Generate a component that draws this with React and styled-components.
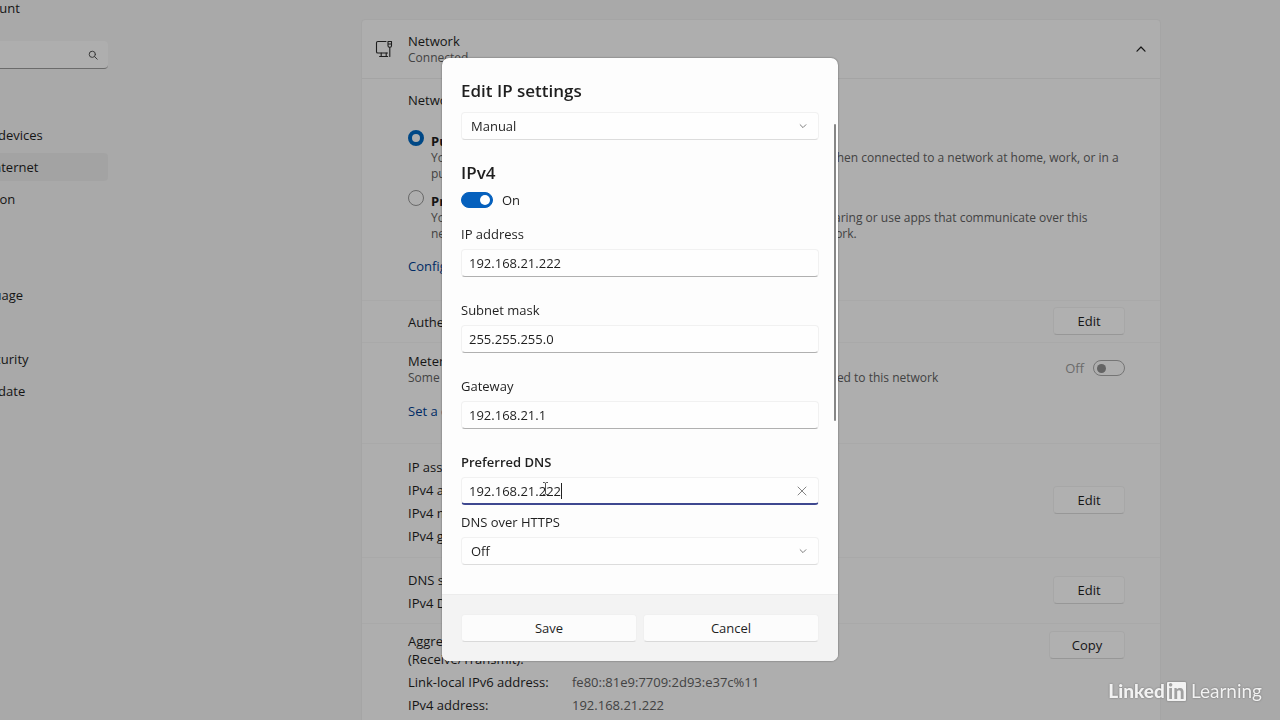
import React, { useState } from "react";
import styled, { createGlobalStyle } from "styled-components";

const sidebarItems = [
  { label: "Bluetooth & devices", top: 0 },
  { label: "Network & internet", top: 4, active: true },
  { label: "Personalization", top: 4 },
  { label: "Time & language", top: 68 },
  { label: "Privacy & security", top: 36 },
  { label: "Windows Update", top: 4 },
];

const ChevronIcon = ({ up, size = 8 }) => (
  <svg width={size} height={size} viewBox="0 0 10 10" fill="none" stroke="currentColor" strokeWidth="1.2" strokeLinecap="round" strokeLinejoin="round">
    <path d={up ? "M1 7.2 5 3l4 4.200" : "M1.400 3.400 5 7 8.600 3.400"} />
  </svg>
);

const SearchIcon = () => (
  <svg width="10" height="10" viewBox="0 0 10 10" fill="none" stroke="#555" strokeWidth="1" strokeLinecap="round">
    <circle cx="4.300" cy="4.300" r="3.100" />
    <path d="M6.600 6.600 9.200 9.200" />
  </svg>
);

const EthernetIcon = () => (
  <svg width="18" height="18" viewBox="0 0 18 18" fill="none" stroke="#2a2a2a" strokeWidth="1.1" strokeLinecap="round" strokeLinejoin="round">
    <path d="M11 1.500H2.800a1.300 1.300 0 0 0-1.300 1.300v8.900A1.300 1.300 0 0 0 2.800 13h9.700" />
    <path d="M6.200 13v3.500M11.200 13v3.500M4.600 16.500h8" />
    <path d="M13 1.500h3.500v4.300a1.500 1.500 0 0 1-1.500 1.500h-.5a1.500 1.500 0 0 1-1.500-1.500zM13 4h3.500M14.800 7.300v9.200" />
  </svg>
);

const CloseIcon = () => (
  <svg width="10" height="10" viewBox="0 0 10 10" fill="none" stroke="#777" strokeWidth="0.9" strokeLinecap="round">
    <path d="M1 1 9 9M9 1 1 9" />
  </svg>
);

const TextPointer = () => (
  <Pointer width="7" height="13" viewBox="0 0 7 13" fill="none" stroke="#555" strokeWidth="1">
    <path d="M1 .5h1.800l.7.700.7-.700H6M3.500 1v11M1 12.500h1.800l.7-.700.7.700H6" />
  </Pointer>
);

const TextField = ({ id, label, value, onChange }) => (
  <FieldGroup>
    <FieldLabel htmlFor={id}>{label}</FieldLabel>
    <FieldInput id={id} value={value} onChange={(e) => onChange(e.target.value)} />
  </FieldGroup>
);

const EditIpModal = () => {
  const [mode, setMode] = useState("Manual");
  const [enabled, setEnabled] = useState(true);
  const [ip, setIp] = useState("192.168.21.222");
  const [mask, setMask] = useState("255.255.255.0");
  const [gateway, setGateway] = useState("192.168.21.1");
  const [dns, setDns] = useState("192.168.21.222");
  const [doh, setDoh] = useState("Off");

  return (
    <Overlay>
      <Modal role="dialog" aria-labelledby="modal-title">
        <ModalBody>
          <ModalTitle id="modal-title">Edit IP settings</ModalTitle>
          <SelectBox>
            <select aria-labelledby="modal-title" value={mode} onChange={(e) => setMode(e.target.value)}>
              <option>Manual</option>
            </select>
            <ChevronIcon />
          </SelectBox>
          <SectionTitle>IPv4</SectionTitle>
          <SwitchLabel>
            <Switch type="checkbox" checked={enabled} onChange={() => setEnabled(!enabled)} />
            {enabled ? "On" : "Off"}
          </SwitchLabel>
          <TextField id="ip" label="IP address" value={ip} onChange={setIp} />
          <TextField id="mask" label="Subnet mask" value={mask} onChange={setMask} />
          <TextField id="gateway" label="Gateway" value={gateway} onChange={setGateway} />
          <FieldLabel htmlFor="dns" $bold>Preferred DNS</FieldLabel>
          <ActiveField>
            <FieldInput id="dns" $active value={dns} onChange={(e) => setDns(e.target.value)} />
            <Caret />
            <TextPointer />
            <ClearBtn aria-label="Clear" onClick={() => setDns("")}>
              <CloseIcon />
            </ClearBtn>
          </ActiveField>
          <FieldLabel htmlFor="doh">DNS over HTTPS</FieldLabel>
          <SelectBox>
            <select id="doh" value={doh} onChange={(e) => setDoh(e.target.value)}>
              <option>Off</option>
            </select>
            <ChevronIcon />
          </SelectBox>
          <ScrollThumb />
        </ModalBody>
        <ModalFooter>
          <Button>Save</Button>
          <Button>Cancel</Button>
        </ModalFooter>
      </Modal>
    </Overlay>
  );
};

export default function App() {
  const [profile, setProfile] = useState("public");

  return (
    <>
      <GlobalStyle />
      <Page>
        <Sidebar>
          <Account>Local Account</Account>
          <SearchBox>
            <input aria-label="Search" />
            <SearchIcon />
          </SearchBox>
          <nav>
            {sidebarItems.map((item) => (
              <NavItem key={item.label} href="#" $top={item.top} $active={item.active}>
                {item.label}
              </NavItem>
            ))}
          </nav>
        </Sidebar>
        <Main>
          <Card>
            <CardHeader>
              <EthernetIcon />
              <div>
                <Text>Network</Text>
                <Hint>Connected</Hint>
              </div>
              <ChevronIcon up size={10} />
            </CardHeader>

            <ProfileSection>
              <Text>Network profile type</Text>
              <RadioList>
                <RadioRow>
                  <input
                    type="radio"
                    name="profile"
                    id="public"
                    checked={profile === "public"}
                    onChange={() => setProfile("public")}
                  />
                  <div>
                    <label htmlFor="public">Public network (Recommended)</label>
                    <Hint>
                      Your device is not discoverable on the network. Use this in most cases–when connected to a network at home, work, or in a
                      <br />
                      public place.
                    </Hint>
                  </div>
                </RadioRow>
                <RadioRow>
                  <input
                    type="radio"
                    name="profile"
                    id="private"
                    checked={profile === "private"}
                    onChange={() => setProfile("private")}
                  />
                  <div>
                    <label htmlFor="private">Private network</label>
                    <Hint>
                      Your device is discoverable on the network. Select this if you need file sharing or use apps that communicate over this
                      <br />
                      network. You should know and trust the people and devices on the network.
                    </Hint>
                  </div>
                </RadioRow>
              </RadioList>
              <Link href="#">Configure firewall and security settings</Link>
            </ProfileSection>

            <Section $height={42}>
              <Text>Authentication settings</Text>
              <Button>Edit</Button>
            </Section>

            <MeteredSection>
              <div>
                <Text>Metered connection</Text>
                <Hint>Some apps might work differently to reduce data usage when you're connected to this network</Hint>
                <Link href="#">Set a data limit to help control data usage on this network</Link>
              </div>
              <SwitchLabel $muted>
                Off
                <Switch type="checkbox" disabled />
              </SwitchLabel>
            </MeteredSection>

            <Section $height={114}>
              <Details>
                <dt>IP assignment:</dt>
                <dt>IPv4 address:</dt>
                <dt>IPv4 mask:</dt>
                <dt>IPv4 gateway:</dt>
              </Details>
              <Button>Edit</Button>
            </Section>

            <Section $height={66}>
              <Details>
                <dt>DNS server assignment:</dt>
                <dt>IPv4 DNS servers:</dt>
              </Details>
              <Button>Edit</Button>
            </Section>

            <Section $height={110} $alignTop>
              <Details>
                <dt>
                  Aggregated link speed
                  <br />
                  (Receive/Transmit):
                </dt>
                <dt>Link-local IPv6 address:</dt>
                <dd>fe80::81e9:7709:2d93:e37c%11</dd>
                <dt>IPv4 address:</dt>
                <dd>192.168.21.222</dd>
              </Details>
              <Button $wide>Copy</Button>
            </Section>
          </Card>
        </Main>
      </Page>
      <EditIpModal />
      <Watermark>
        <b>Linked</b>
        <i>in</i>
        <span>Learning</span>
      </Watermark>
    </>
  );
}

const GlobalStyle = createGlobalStyle`
  * {
    box-sizing: border-box;
  }
  body {
    margin: 0;
    height: 100vh;
    overflow: hidden;
    background-color: #f2f2f2;
    color: #1f1f1f;
    font: 13px/18px "Open Sans", "Noto Sans", sans-serif;
  }
  input, select, button {
    font: inherit;
    color: inherit;
  }
`;
const Page = styled.div`
  display: flex;
  align-items: flex-start;
`;
const Sidebar = styled.aside`
  flex: none;
  width: 228px;
  margin-left: -120px;
`;
const Account = styled.div`
  height: 41px;
  padding-left: 56px;
  line-height: 16px;
`;
const SearchBox = styled.div`
  display: flex;
  align-items: center;
  height: 28px;
  margin-bottom: 52px;
  padding-right: 10px;
  background-color: #f9f9f9;
  border-bottom: 1px solid #9a9a9a;
  border-radius: 4px;
  input {
    flex: 1;
    min-width: 0;
    border: none;
    outline: none;
    background: none;
  }
`;
const NavItem = styled.a`
  display: flex;
  align-items: center;
  height: 28px;
  margin-top: ${(props) => props.$top}px;
  padding-left: 42px;
  border-radius: 4px;
  color: inherit;
  text-decoration: none;
  background-color: ${(props) => (props.$active ? "#eaeaea" : "transparent")};
`;
const Main = styled.main`
  flex: 1;
  min-width: 0;
  padding: 19px 119px 0 253px;
`;
const Card = styled.section`
  background-color: #f9f9f9;
  border: 1px solid #ececec;
  border-radius: 4px;
`;
const CardHeader = styled.header`
  display: flex;
  align-items: center;
  height: 59px;
  padding: 0 14px 0 13px;
  border-bottom: 1px solid #ebebeb;
  &>div {
    flex: 1;
    padding-left: 15px;
  }
`;
const Text = styled.div`
  white-space: nowrap;
`;
const Hint = styled.div`
  font-size: 12px;
  line-height: 16px;
  white-space: nowrap;
  color: #606060;
`;
const Link = styled.a`
  color: #003e92;
  text-decoration: none;
  white-space: nowrap;
`;
const ProfileSection = styled.div`
  height: 221px;
  padding: 12px 35px 0 46px;
  &>a {
    display: block;
    margin-top: 15px;
  }
`;
const RadioList = styled.div`
  display: grid;
  gap: 8px;
  margin-top: 21px;
`;
const RadioRow = styled.div`
  display: flex;
  gap: 7px;
  input {
    appearance: none;
    flex: none;
    width: 16px;
    height: 16px;
    margin: 0;
    border: 1px solid #969696;
    border-radius: 50%;
    &:checked {
      border: 4px solid #0067c0;
    }
  }
  label {
    display: block;
    padding-top: 2px;
    font-weight: 700;
  }
`;
const Button = styled.button`
  flex: none;
  width: ${(props) => (props.$wide ? 76 : 72)}px;
  height: 28px;
  padding: 0;
  background-color: #fcfcfc;
  border: 1px solid #f0f0f0;
  border-bottom-color: #d9d9d9;
  border-radius: 4px;
`;
const Section = styled.div`
  display: flex;
  justify-content: space-between;
  align-items: ${(props) => (props.$alignTop ? "flex-start" : "center")};
  min-height: ${(props) => props.$height}px;
  padding: ${(props) => (props.$alignTop ? "7px" : "0")} 35px 0 46px;
  border-top: 1px solid #f3f3f3;
  ${Button} {
    margin-bottom: 2px;
  }
`;
const MeteredSection = styled.div`
  display: flex;
  justify-content: space-between;
  align-items: flex-start;
  height: 101px;
  padding: 9px 35px 0 46px;
  border-top: 1px solid #f3f3f3;
  a {
    display: block;
    margin-top: 16px;
  }
  &>label {
    margin-top: 7px;
  }
`;
const Details = styled.dl`
  display: grid;
  grid-template-columns: 144px auto;
  column-gap: 20px;
  row-gap: 5px;
  margin: 0;
  padding-top: 1px;
  dt {
    grid-column: 1;
    white-space: nowrap;
  }
  dd {
    grid-column: 2;
    margin: 0;
    color: #606060;
  }
`;
const SwitchLabel = styled.label`
  display: flex;
  align-items: center;
  gap: 9px;
  color: ${(props) => (props.$muted ? "#9a9a9a" : "inherit")};
`;
const Switch = styled.input`
  appearance: none;
  display: flex;
  align-items: center;
  width: 32px;
  height: 16px;
  margin: 0;
  padding: 0 3px;
  border: 1px solid #a8a8a8;
  border-radius: 8px;
  &::before {
    content: "";
    width: 9px;
    height: 9px;
    border-radius: 50%;
    background-color: #909090;
  }
  &:checked {
    justify-content: flex-end;
    padding: 0 2px;
    border-color: #0560bd;
    background-color: #0560bd;
  }
  &:checked::before {
    width: 10px;
    height: 10px;
    background-color: #fff;
  }
`;
const Overlay = styled.div`
  position: fixed;
  inset: 0;
  display: flex;
  align-items: center;
  justify-content: center;
  padding-bottom: 1px;
  background-color: rgba(0, 0, 0, 0.3);
`;
const Modal = styled.div`
  width: 396px;
  max-width: 100%;
  overflow: hidden;
  background-color: #fdfdfd;
  border-radius: 7px;
  box-shadow: 0 0 2px rgba(0, 0, 0, 0.5);
`;
const ModalBody = styled.div`
  position: relative;
  padding: 21px 19px 29px;
`;
const ModalTitle = styled.h2`
  margin: 0 0 9px;
  font-size: 17px;
  font-weight: 600;
  line-height: 24px;
`;
const SectionTitle = styled.h3`
  margin: 21px 0 6px;
  font-size: 17px;
  font-weight: 600;
  line-height: 24px;
`;
const SelectBox = styled.div`
  position: relative;
  select {
    appearance: none;
    display: block;
    width: 100%;
    height: 28px;
    padding: 0 9px;
    background-color: #fefefe;
    border: 1px solid #f1f1f1;
    border-bottom-color: #dcdcdc;
    border-radius: 4px;
  }
  svg {
    position: absolute;
    top: 10px;
    right: 12px;
    color: #777;
    pointer-events: none;
  }
`;
const FieldGroup = styled.div`
  margin: 16px 0 24px;
  &+& {
    margin-top: 0;
  }
`;
const FieldLabel = styled.label`
  display: block;
  padding-bottom: 6px;
  font-weight: ${(props) => (props.$bold ? 600 : 400)};
`;
const FieldInput = styled.input`
  display: block;
  width: 100%;
  height: 28px;
  padding: 0 7px;
  outline: none;
  background-color: #fefefe;
  border: 1px solid #f1f1f1;
  border-bottom: ${(props) => (props.$active ? "2px solid #3f4890" : "1px solid #b0b0b0")};
  border-radius: 4px;
`;
const ActiveField = styled.div`
  position: relative;
  margin-bottom: 8px;
`;
const Caret = styled.span`
  position: absolute;
  left: 100px;
  top: 6px;
  width: 1px;
  height: 16px;
  background-color: #222;
`;
const Pointer = styled.svg`
  position: absolute;
  left: 81px;
  top: 5px;
`;
const ClearBtn = styled.button`
  position: absolute;
  top: 4px;
  right: 7px;
  display: flex;
  align-items: center;
  justify-content: center;
  width: 20px;
  height: 20px;
  padding: 0;
  border: none;
  background: none;
`;
const ScrollThumb = styled.div`
  position: absolute;
  top: 66px;
  right: 2px;
  width: 2px;
  height: 297px;
  border-radius: 1px;
  background-color: #868686;
`;
const ModalFooter = styled.footer`
  display: flex;
  gap: 6px;
  padding: 19px;
  background-color: #f3f3f3;
  border-top: 1px solid #ececec;
  ${Button} {
    flex: 1;
  }
`;
const Watermark = styled.div`
  position: fixed;
  right: 18px;
  bottom: 18px;
  display: flex;
  align-items: center;
  color: #f2f2f2;
  font: 19px/22px Lato, sans-serif;
  text-shadow: 0 0 2px rgba(0, 0, 0, 0.4);
  b {
    font-weight: 900;
  }
  i {
    width: 19px;
    height: 19px;
    margin: 0 5px 0 2px;
    border-radius: 1px;
    background-color: #f2f2f2;
    color: #a0a0a0;
    font-size: 20px;
    font-style: normal;
    font-weight: 900;
    line-height: 18px;
    text-align: center;
    text-shadow: none;
    box-shadow: 0 0 2px rgba(0, 0, 0, 0.4);
  }
`;
